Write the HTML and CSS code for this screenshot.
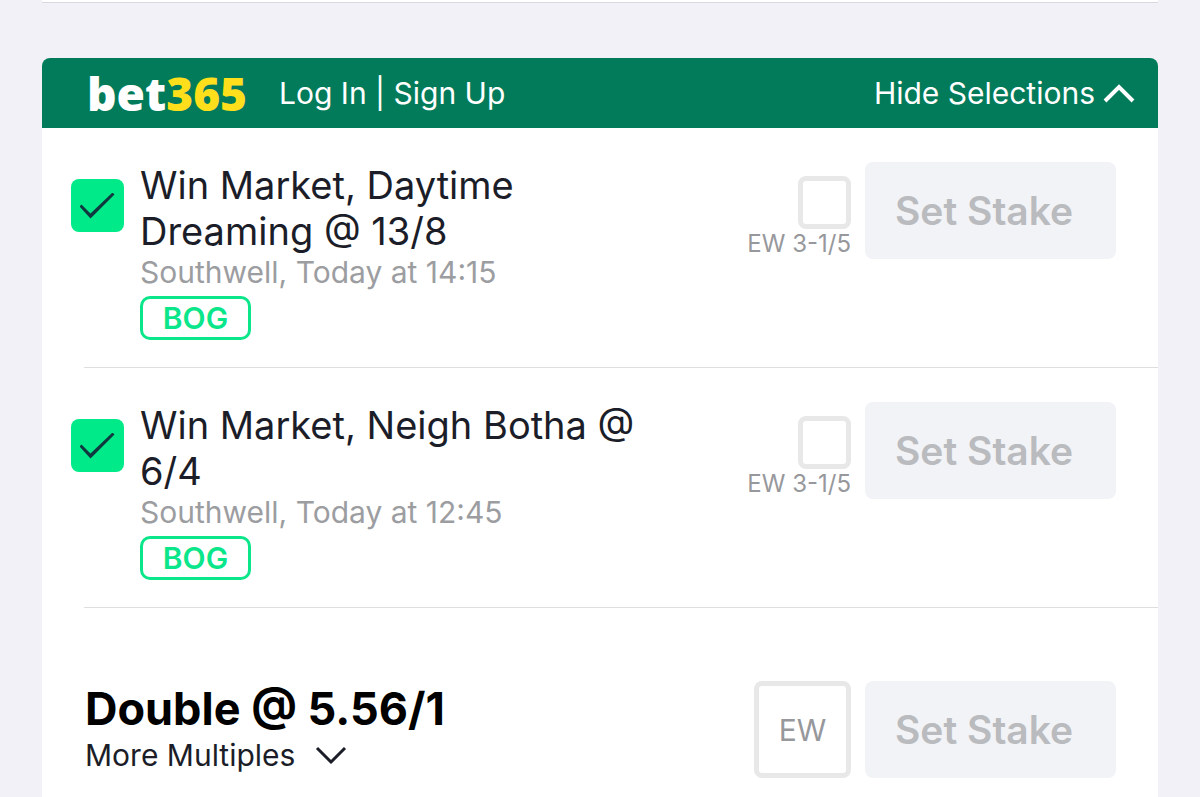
FILE: index.html
```html
<!DOCTYPE html>
<html lang="en">
<head>
<meta charset="utf-8">
<meta name="viewport" content="width=device-width, initial-scale=1">
<title>Bet slip</title>
<link rel="stylesheet" href="styles.css">
</head>
<body>
<div class="previous-card"></div>
<main class="card">
  <header class="card-header">
    <span class="logo">bet<span class="logo-number">365</span></span>
    <nav class="account"><a href="#login">Log In</a> | <a href="#signup">Sign Up</a></nav>
    <button class="toggle" type="button">Hide Selections
      <svg class="chevron" viewBox="0 0 32 20" aria-hidden="true"><path d="M2 18 16 4 30 18"/></svg>
    </button>
  </header>

  <section class="selection">
    <input class="pick" type="checkbox" id="pick-1" checked>
    <div class="details">
      <label class="title" for="pick-1">Win Market, Daytime Dreaming @ 13/8</label>
      <p class="event">Southwell, Today at 14:15</p>
      <span class="badge">BOG</span>
    </div>
    <div class="each-way">
      <input class="ew-box" type="checkbox" id="ew-1">
      <label for="ew-1">EW 3-1/5</label>
    </div>
    <input class="stake" type="text" placeholder="Set Stake" aria-label="Stake for Daytime Dreaming">
  </section>

  <section class="selection">
    <input class="pick" type="checkbox" id="pick-2" checked>
    <div class="details">
      <label class="title" for="pick-2">Win Market, Neigh Botha @ 6/4</label>
      <p class="event">Southwell, Today at 12:45</p>
      <span class="badge">BOG</span>
    </div>
    <div class="each-way">
      <input class="ew-box" type="checkbox" id="ew-2">
      <label for="ew-2">EW 3-1/5</label>
    </div>
    <input class="stake" type="text" placeholder="Set Stake" aria-label="Stake for Neigh Botha">
  </section>

  <section class="multiple">
    <div class="multiple-info">
      <h2>Double @ 5.56/1</h2>
      <button class="more" type="button">More Multiples
        <svg class="chevron" viewBox="0 0 32 20" aria-hidden="true"><path d="M2 3 16 17 30 3"/></svg>
      </button>
    </div>
    <button class="ew-button" type="button">EW</button>
    <input class="stake" type="text" placeholder="Set Stake" aria-label="Stake for double">
  </section>
</main>
</body>
</html>
```
FILE: styles.css
```css
* {
  box-sizing: border-box;
}

body {
  margin: 0;
  padding: 0 42px;
  background: #f2f1f8;
  color: #1b1d28;
  font-family: Inter, "Liberation Sans", sans-serif;
  font-size: 30px;
}

button,
input {
  margin: 0;
  font: inherit;
}

button {
  padding: 0;
  border: 0;
  background: none;
  color: inherit;
  cursor: pointer;
}

a {
  color: inherit;
  text-decoration: none;
}

.previous-card {
  height: 3px;
  margin-bottom: 55px;
  border-bottom: 1px solid #d9d9e1;
  background: #fff;
}

.card {
  background: #fff;
  border-radius: 8px 8px 0 0;
}

.card-header {
  display: flex;
  align-items: center;
  height: 70px;
  padding: 0 23px 0 45px;
  border-radius: 8px 8px 0 0;
  background: #027b5b;
  color: #fff;
}

.logo {
  margin-right: 32px;
  font-family: "Open Sans", sans-serif;
  font-size: 46px;
  font-weight: 800;
  line-height: 70px;
}

.logo-number {
  color: #ffdf1b;
}

.toggle,
.more {
  display: flex;
  align-items: center;
  gap: 8px;
}

.toggle {
  margin-left: auto;
}

.chevron {
  width: 32px;
  height: 20px;
  fill: none;
  stroke: currentColor;
  stroke-width: 4;
}

.more .chevron {
  stroke-width: 3;
}

.selection {
  display: flex;
  align-items: flex-start;
  height: 240px;
  margin-left: 42px;
  padding: 34px 42px 0 0;
  border-bottom: 1px solid #dedee0;
}

.pick,
.ew-box {
  flex: none;
  width: 53px;
  height: 53px;
  border-radius: 8px;
  appearance: none;
}

.pick {
  display: grid;
  place-items: center;
  margin: 17px 16px 0 -13px;
  background: #00ea8a;
}

.pick:checked::before {
  content: "";
  width: 36px;
  height: 26px;
  background: #10383f;
  clip-path: polygon(0 14px, 2px 12px, 11px 21px, 33px 0, 35px 2px, 11px 26px);
}

.details {
  flex: 1;
}

.title {
  display: block;
  max-width: 540px;
  font-size: 38px;
  line-height: 46px;
}

.event {
  margin: 0;
  color: #9c9da1;
  line-height: 36px;
}

.badge {
  display: block;
  width: 111px;
  margin-top: 6px;
  border: 3px solid #0be68b;
  border-radius: 10px;
  color: #0be68b;
  font-weight: 600;
  line-height: 38px;
  text-align: center;
}

.each-way {
  display: flex;
  flex-direction: column;
  align-items: flex-end;
  padding-top: 14px;
  color: #97989c;
  font-size: 24px;
  line-height: 30px;
}

.ew-box {
  border: 5px solid #e8e8e8;
  background: #fff;
}

.stake {
  flex: none;
  width: 251px;
  height: 97px;
  margin-left: 14px;
  padding: 0 30px;
  border: 0;
  border-radius: 8px;
  background: #f2f3f6;
  color: #1b1d28;
  font-size: 39px;
  font-weight: 600;
}

.stake::placeholder {
  color: #babbbe;
  opacity: 1;
}

.multiple {
  display: flex;
  align-items: flex-start;
  padding: 73px 42px 19px 43px;
}

.multiple-info {
  flex: 1;
}

.multiple h2 {
  margin: 0;
  color: #000;
  font-size: 45px;
  font-weight: 700;
  line-height: 56px;
}

.more {
  gap: 20px;
  line-height: 36px;
}

.ew-button {
  width: 97px;
  height: 97px;
  border: 5px solid #e8e8e8;
  border-radius: 8px;
  color: #97989c;
}
```
